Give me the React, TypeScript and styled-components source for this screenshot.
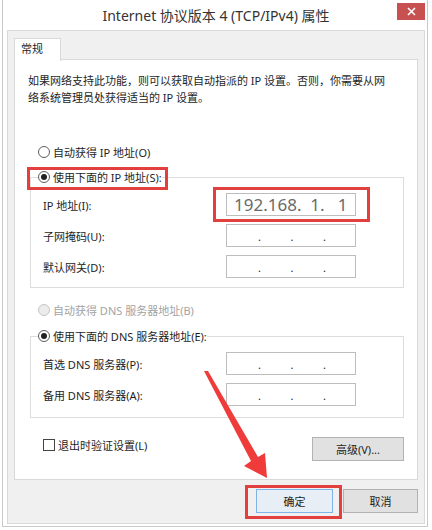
import React from 'react';
import styled, { createGlobalStyle } from 'styled-components';

const GlobalStyle = createGlobalStyle`
	html, body {
		margin: 0;
		padding: 0;
		background: #ffffff;
	}
	body {
		font-family: 'Noto Sans', 'Noto Sans CJK SC', sans-serif;
		font-size: 11px;
		color: #1e1e1e;
	}
	* {
		box-sizing: border-box;
	}
`;

type Field = { label: string; value?: string };

const ipFields: Field[] = [
	{ label: 'IP 地址(I):', value: '192.168.  1.   1' },
	{ label: '子网掩码(U):' },
	{ label: '默认网关(D):' },
];

const dnsFields: Field[] = [
	{ label: '首选 DNS 服务器(P):' },
	{ label: '备用 DNS 服务器(A):' },
];

function IpBox({ value }: { value?: string }) {
	if (value) {
		return (
			<IpInput>
				<IpText>{value}</IpText>
			</IpInput>
		);
	}
	return (
		<IpInput>
			<Octet />
			<Dot>.</Dot>
			<Octet />
			<Dot>.</Dot>
			<Octet />
			<Dot>.</Dot>
			<Octet />
		</IpInput>
	);
}

function FieldRows({ fields }: { fields: Field[] }) {
	return (
		<Rows>
			{fields.map((f) => (
				<Row key={f.label}>
					<RowLabel>{f.label}</RowLabel>
					<IpBox value={f.value} />
				</Row>
			))}
		</Rows>
	);
}

function Radio({ checked, disabled, label }: { checked?: boolean; disabled?: boolean; label: string }) {
	return (
		<Choice $disabled={disabled}>
			<RadioDot $checked={checked} $disabled={disabled} />
			<span>{label}</span>
		</Choice>
	);
}

export default function App() {
	return (
		<Stage>
			<GlobalStyle />
			<Window>
				<TitleBar>
					<span />
					<Title>Internet 协议版本 4 (TCP/IPv4) 属性</Title>
					<CloseButton>
						<svg width='9' height='9' viewBox='0 0 9 9'>
							<path d='M1 1 L8 8 M8 1 L1 8' stroke='#fff' strokeWidth='1.6' />
						</svg>
					</CloseButton>
				</TitleBar>

				<Body>
					<Tabs>
						<Tab>常规</Tab>
					</Tabs>
					<Panel>
						<Description>
							如果网络支持此功能，则可以获取自动指派的 IP 设置。否则，你需要从网
							<br />
							络系统管理员处获得适当的 IP 设置。
						</Description>

						<Options>
							<RadioLine>
								<Radio label='自动获得 IP 地址(O)' />
							</RadioLine>
							<Group $top={5} $bottom={9}>
								<Legend>
									<Radio checked label='使用下面的 IP 地址(S):' />
								</Legend>
								<FieldRows fields={ipFields} />
							</Group>

							<RadioLine $top={12}>
								<Radio disabled label='自动获得 DNS 服务器地址(B)' />
							</RadioLine>
							<Group $top={6} $bottom={11}>
								<Legend>
									<Radio checked label='使用下面的 DNS 服务器地址(E):' />
								</Legend>
								<FieldRows fields={dnsFields} />
							</Group>

							<Footer>
								<Choice>
									<CheckBox />
									<span>退出时验证设置(L)</span>
								</Choice>
								<Button $width={92}>高级(V)...</Button>
							</Footer>
						</Options>
					</Panel>

					<DialogButtons>
						<Button $width={77} $focused>
							确定
						</Button>
						<Button $width={75}>取消</Button>
					</DialogButtons>
				</Body>
			</Window>

			<Mark $x={27} $y={167} $w={141} $h={23} />
			<Mark $x={213} $y={187} $w={157} $h={35} />
			<Mark $x={245} $y={485} $w={97} $h={34} />
			<Arrow width='432' height='530' viewBox='0 0 432 530'>
				<polygon
					points='204,371 208,371 258,457 265,453 267,478 244,466 251,461'
					fill='#f03b3b'
				/>
			</Arrow>
		</Stage>
	);
}

const Stage = styled('div')`
	position: relative;
	width: 432px;
	height: 530px;
	overflow: hidden;
`;

const Window = styled('div')`
	margin-left: 2px;
	width: 426px;
	height: 527px;
	border: 1px solid #c9c9c9;
	border-top: none;
	background: #ffffff;
	padding: 0 2px 2px 4px;
	display: flex;
	flex-direction: column;
`;

const TitleBar = styled('div')`
	height: 30px;
	display: grid;
	grid-template-columns: 1fr auto 1fr;
	align-items: start;
`;

const Title = styled('div')`
	font-size: 14px;
	line-height: 32px;
	color: #333333;
	white-space: nowrap;
`;

const CloseButton = styled('div')`
	justify-self: end;
	margin-top: 3px;
	width: 28px;
	height: 17px;
	background: #c75050;
	display: flex;
	align-items: center;
	justify-content: center;
`;

const Body = styled('div')`
	flex: 1;
	background: #f0f0f0;
	border: 1px solid #d9d9d9;
	padding: 7px 6px 0 6px;
	display: flex;
	flex-direction: column;
`;

const Tabs = styled('div')`
	display: flex;
	height: 22px;
	margin-bottom: -1px;
	position: relative;
	z-index: 1;
`;

const Tab = styled('div')`
	width: 47px;
	height: 23px;
	background: #ffffff;
	border: 1px solid #d9d9d9;
	border-bottom: none;
	padding-left: 6px;
	line-height: 20px;
`;

const Panel = styled('div')`
	height: 421px;
	background: #ffffff;
	border: 1px solid #d9d9d9;
	padding: 12px 12px 0 13px;
`;

const Description = styled('p')`
	margin: 0;
	line-height: 17px;
	white-space: nowrap;
`;

const Options = styled('div')`
	margin: 36px 0 0 2px;
	width: 374px;
	display: flex;
	flex-direction: column;
`;

const RadioLine = styled('div')<{ $top?: number }>`
	margin-top: ${(p) => p.$top ?? 0}px;
	padding-left: 8px;
	height: 20px;
	display: flex;
	align-items: center;
`;

const Choice = styled('label')<{ $disabled?: boolean }>`
	display: flex;
	align-items: center;
	gap: 3px;
	height: 20px;
	white-space: nowrap;
	color: ${(p) => (p.$disabled ? '#a3a3a3' : '#1e1e1e')};
`;

const RadioDot = styled('span')<{ $checked?: boolean; $disabled?: boolean }>`
	width: 12px;
	height: 12px;
	border-radius: 50%;
	border: 1px solid ${(p) => (p.$disabled ? '#c6c6c6' : '#5e5e5e')};
	background: ${(p) => (p.$disabled ? '#ececec' : '#ffffff')};
	display: flex;
	align-items: center;
	justify-content: center;

	&::after {
		content: '';
		width: 6px;
		height: 6px;
		border-radius: 50%;
		background: #222222;
		display: ${(p) => (p.$checked ? 'block' : 'none')};
	}
`;

const CheckBox = styled('span')`
	width: 12px;
	height: 12px;
	border: 1px solid #444444;
	background: #ffffff;
`;

const Group = styled('fieldset')<{ $top: number; $bottom: number }>`
	margin: ${(p) => p.$top}px 0 0 0;
	padding: 0 0 ${(p) => p.$bottom}px 0;
	border: 1px solid #dcdcdc;
	min-width: 0;
`;

const Legend = styled('legend')`
	margin-left: 7px;
	padding: 0;
	height: 20px;
	background: #ffffff;
`;

const Rows = styled('div')`
	margin-top: 6px;
	padding-left: 12px;
	display: flex;
	flex-direction: column;
	gap: 8px;
`;

const Row = styled('div')`
	display: grid;
	grid-template-columns: 183px 130px;
	align-items: center;
`;

const RowLabel = styled('span')`
	white-space: nowrap;
`;

const IpInput = styled('div')`
	height: 23px;
	border: 1px solid #bdbdbd;
	background: #ffffff;
	display: flex;
	align-items: center;
	padding-left: 2px;
`;

const Octet = styled('span')`
	width: 29px;
`;

const Dot = styled('span')`
	width: 4px;
	text-align: center;
	font-size: 11px;
	line-height: 1;
	margin-top: 2px;
`;

const IpText = styled('span')`
	padding-left: 5px;
	font-size: 17px;
	color: #6a6a6a;
	white-space: pre;
	line-height: 21px;
`;

const Footer = styled('div')`
	margin-top: 17px;
	padding-left: 13px;
	display: flex;
	justify-content: space-between;
	align-items: flex-start;
`;

const Button = styled('div')<{ $width: number; $focused?: boolean }>`
	width: ${(p) => p.$width}px;
	height: 24px;
	background: ${(p) => (p.$focused ? '#e7eef5' : '#e1e1e1')};
	border: 1px solid ${(p) => (p.$focused ? '#7fb2e5' : '#b2b2b2')};
	display: flex;
	align-items: center;
	justify-content: center;
	white-space: nowrap;
	color: #1e1e1e;

	${Footer} & {
		margin-top: 2px;
	}
`;

const DialogButtons = styled('div')`
	margin-top: 9px;
	display: flex;
	justify-content: flex-end;
	gap: 10px;
`;

const Mark = styled('div')<{ $x: number; $y: number; $w: number; $h: number }>`
	position: absolute;
	left: ${(p) => p.$x}px;
	top: ${(p) => p.$y}px;
	width: ${(p) => p.$w}px;
	height: ${(p) => p.$h}px;
	border: 3px solid #e2403f;
	pointer-events: none;
`;

const Arrow = styled('svg')`
	position: absolute;
	left: 0;
	top: 0;
	pointer-events: none;
`;
